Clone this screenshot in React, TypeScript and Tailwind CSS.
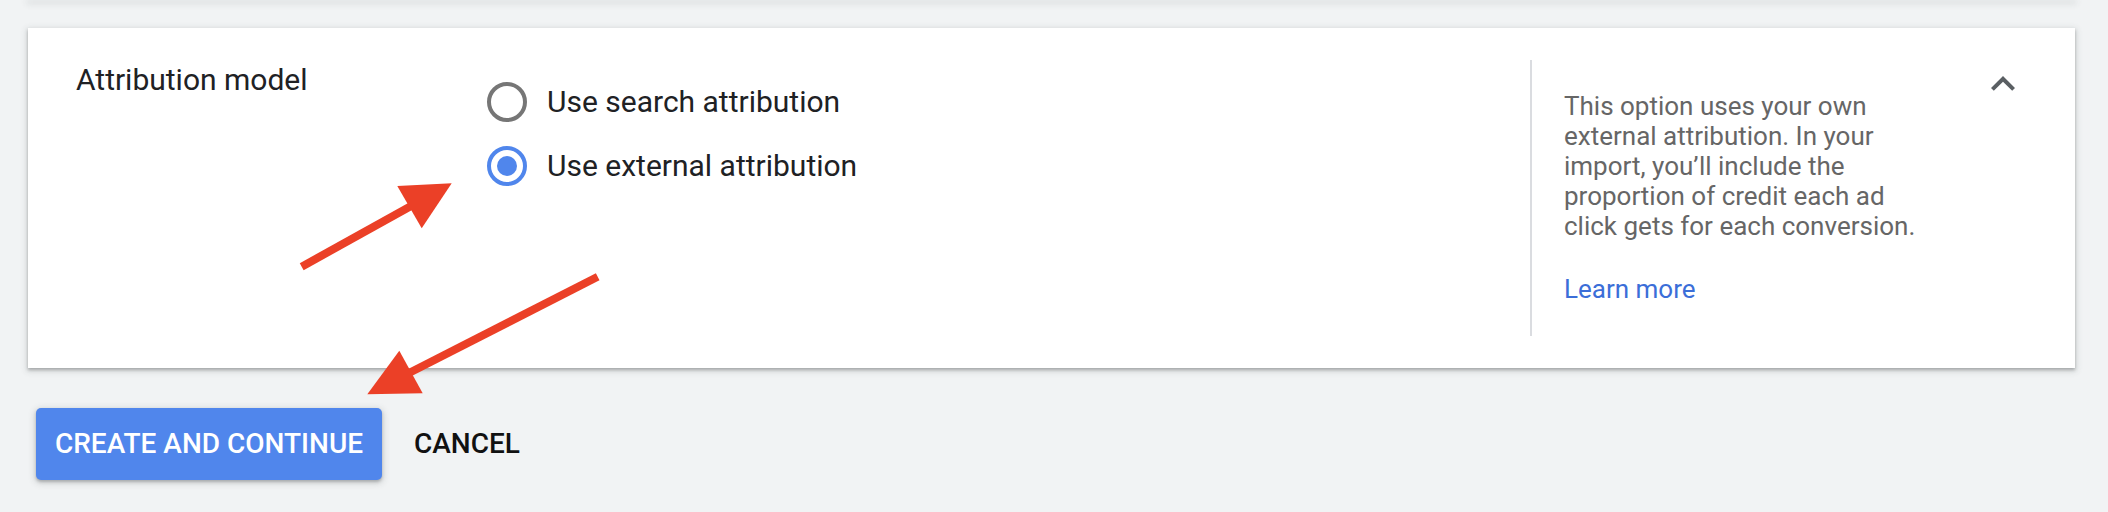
import React from "react";

export default function App() {
  return (
    <div
      className="relative w-[2108px] h-[512px] overflow-hidden bg-[#f1f3f4]"
      style={{ fontFamily: "Roboto, 'Noto Sans', Arial, sans-serif" }}
    >
      {/* previous card edge */}
      <div className="ml-[28px] w-[2047px] h-0 bg-white shadow-[0_2px_4px_rgba(60,64,67,0.3),0_2px_6px_2px_rgba(60,64,67,0.12)]" />

      {/* card */}
      <div className="mt-[28px] ml-[28px] w-[2047px] h-[340px] bg-white px-[48px] py-[32px] shadow-[0_2px_3px_rgba(60,64,67,0.35),0_2px_6px_2px_rgba(60,64,67,0.12)]">
        <div className="flex h-full">
          <div className="w-[411px] shrink-0 text-[30px] leading-[40px] text-[#202124]">
            Attribution model
          </div>

          <div className="flex-1 pt-[10px]">
            <div className="flex h-[64px] items-center gap-[20px]">
              <span className="h-[40px] w-[40px] shrink-0 rounded-full border-[4px] border-[#767676]" />
              <span className="text-[30px] leading-[40px] text-[#202124]">Use search attribution</span>
            </div>
            <div className="flex h-[64px] items-center gap-[20px]">
              <span className="flex h-[40px] w-[40px] shrink-0 items-center justify-center rounded-full border-[4px] border-[#5086ec]">
                <span className="h-[20px] w-[20px] rounded-full bg-[#5086ec]" />
              </span>
              <span className="text-[30px] leading-[40px] text-[#202124]">Use external attribution</span>
            </div>
          </div>

          <div className="w-[449px] shrink-0 border-l-[2px] border-[#dadce0] pl-[32px] pt-[31px]">
            <p className="text-[26px] leading-[30px] text-[#666666] whitespace-nowrap">
              This option uses your own
              <br />
              external attribution. In your
              <br />
              import, you’ll include the
              <br />
              proportion of credit each ad
              <br />
              click gets for each conversion.
            </p>
            <a className="mt-[33px] block text-[26px] leading-[30px] text-[#3b6ed8]">Learn more</a>
          </div>

          <div className="h-[48px] w-[48px] shrink-0">
            <svg viewBox="0 0 24 24" width="48" height="48">
              <path d="M12 8l-6 6 1.41 1.41L12 10.83l4.59 4.58L18 14z" fill="#5a5f63" />
            </svg>
          </div>
        </div>
      </div>

      {/* actions */}
      <div className="mt-[40px] ml-[36px] flex items-center gap-[16px]">
        <button className="flex h-[72px] w-[346px] items-center justify-center rounded-[5px] bg-[#5086ec] text-[28px] font-medium text-white shadow-[0_2px_3px_rgba(60,64,67,0.3),0_2px_6px_2px_rgba(60,64,67,0.15)]">
          CREATE AND CONTINUE
        </button>
        <button className="flex h-[72px] items-center px-[16px] text-[28px] font-medium text-[#111111]">
          CANCEL
        </button>
      </div>

      {/* annotation arrows */}
      <svg
        className="pointer-events-none absolute left-0 top-0"
        width="2108"
        height="512"
        viewBox="0 0 2108 512"
      >
        <line x1="301.7" y1="266.7" x2="412" y2="205.5" stroke="#eb4027" strokeWidth="8" />
        <polygon points="397.3,186 451.7,183.3 421.7,228.3" fill="#eb4027" />
        <line x1="597.7" y1="276.7" x2="408" y2="373.5" stroke="#eb4027" strokeWidth="8" />
        <polygon points="399.3,350.7 367.3,394.3 422.7,393.3" fill="#eb4027" />
      </svg>
    </div>
  );
}
